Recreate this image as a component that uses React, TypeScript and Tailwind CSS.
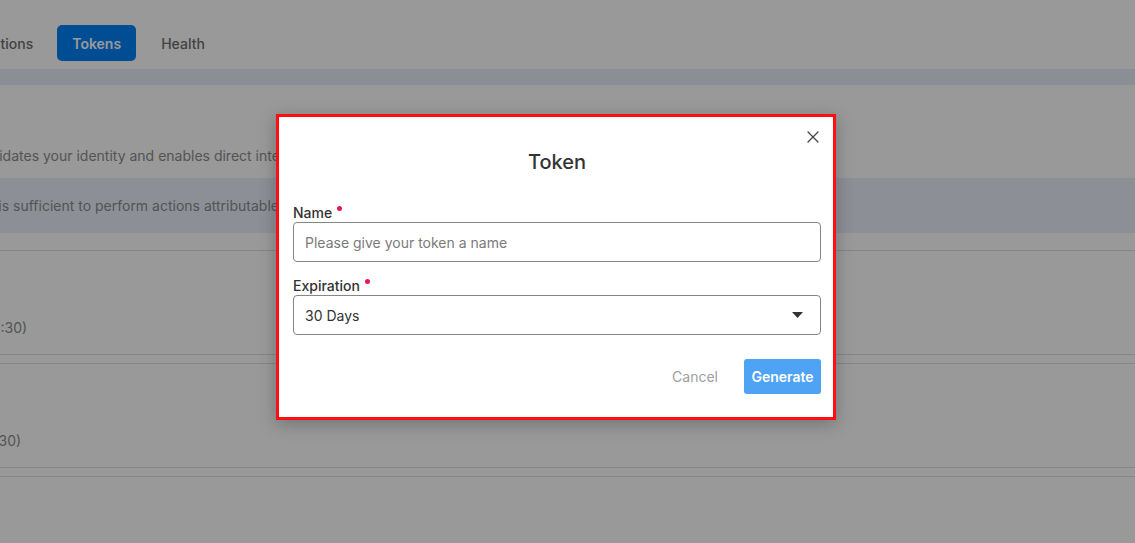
import { X } from "lucide-react";

const font = { fontFamily: "Inter, 'Noto Sans', sans-serif" };

function Row({ date, shift }: { date: string; shift: string }) {
  return (
    <div className="h-[104px] border-b border-[#dedede] flex items-end pb-[16px]">
      <span className={`${shift} text-[14px] text-[#8c8c8c] whitespace-nowrap`}>{date}</span>
    </div>
  );
}

function Field({ label, children }: { label: string; children: React.ReactNode }) {
  return (
    <div className="flex flex-col">
      <div className="h-5 flex items-center text-[14px] font-medium text-[#333]">
        {label}
        <span className="ml-[5px] mb-[7px] w-[5px] h-[5px] rounded-full bg-[#e8175d]" />
      </div>
      {children}
    </div>
  );
}

export default function App() {
  return (
    <div className="relative w-[1135px] h-[543px] overflow-hidden bg-white" style={font}>
      {/* page behind the dialog */}
      <div className="flex items-center h-9 mt-[25px] mb-[8px] whitespace-nowrap">
        <span className="ml-[-50px] text-[14px] font-medium text-[#6f6f6f]">Applications</span>
        <span className="ml-[24px] h-9 w-[79px] rounded-[5px] bg-[#0080f6] text-white text-[14px] font-semibold flex items-center justify-center">
          Tokens
        </span>
        <span className="ml-[25px] text-[14px] font-medium text-[#6f6f6f]">Health</span>
      </div>
      <div className="h-4 bg-[#e7eef8]" />
      <div className="h-[81px] flex items-end">
        <span className="ml-[-74px] text-[14px] text-[#8c8c8c] whitespace-nowrap">
          A token validates your identity and enables direct interaction with the platform API.
        </span>
      </div>
      <div className="mt-[12px] h-[55px] bg-[#eaeffb] flex items-center">
        <span className="ml-[-160px] text-[14px] text-[#8c8c8c] whitespace-nowrap">
          Having this token alone is sufficient to perform actions attributable to your account.
        </span>
      </div>
      <div className="mt-[17px] border-t border-[#dedede]">
        <Row date="Created: 2024-05-12 10:42 (GMT+05:30)" shift="ml-[-246px]" />
        <div className="mt-[8px] border-t border-[#dedede]">
          <Row date="Created: 2024-05-10 08:15 (GMT+05:30)" shift="ml-[-252px]" />
        </div>
        <div className="mt-[8px] border-t border-[#dedede]" />
      </div>

      {/* overlay */}
      <div className="absolute inset-0 bg-black/40" />

      {/* dialog */}
      <div className="absolute left-[276px] top-[114px] w-[560px] border-[3px] border-[#ff0f0f] bg-white shadow-[0_4px_16px_rgba(0,0,0,0.25)] pt-[31px] pb-[23px] pl-[14px] pr-[12px]">
        <button className="absolute right-[10px] top-[10px] text-[#444]">
          <X size={20} strokeWidth={1.5} />
        </button>
        <div className="h-7 text-center text-[20px] font-medium text-[#333] leading-7">Token</div>
        <div className="mt-[26px]">
          <Field label="Name">
            <div className="h-10 rounded-[4px] border border-[#858585] flex items-center px-[11px] text-[14px] text-[#7a7a7a]">
              Please give your token a name
            </div>
          </Field>
        </div>
        <div className="mt-[13px]">
          <Field label="Expiration">
            <div className="h-10 rounded-[4px] border border-[#858585] flex items-center justify-between pl-[11px] pr-[17px] text-[14px] text-[#333]">
              <span>30 Days</span>
              <svg width="11" height="6" viewBox="0 0 11 6">
                <path d="M0 0h11L5.5 6z" fill="#333" />
              </svg>
            </div>
          </Field>
        </div>
        <div className="mt-[24px] flex justify-end items-center gap-[26px]">
          <span className="text-[14px] text-[#9e9e9e]">Cancel</span>
          <span className="h-[35px] w-[77px] rounded-[3px] bg-[#4ea3f5] text-white text-[14px] font-semibold flex items-center justify-center">
            Generate
          </span>
        </div>
      </div>
    </div>
  );
}
